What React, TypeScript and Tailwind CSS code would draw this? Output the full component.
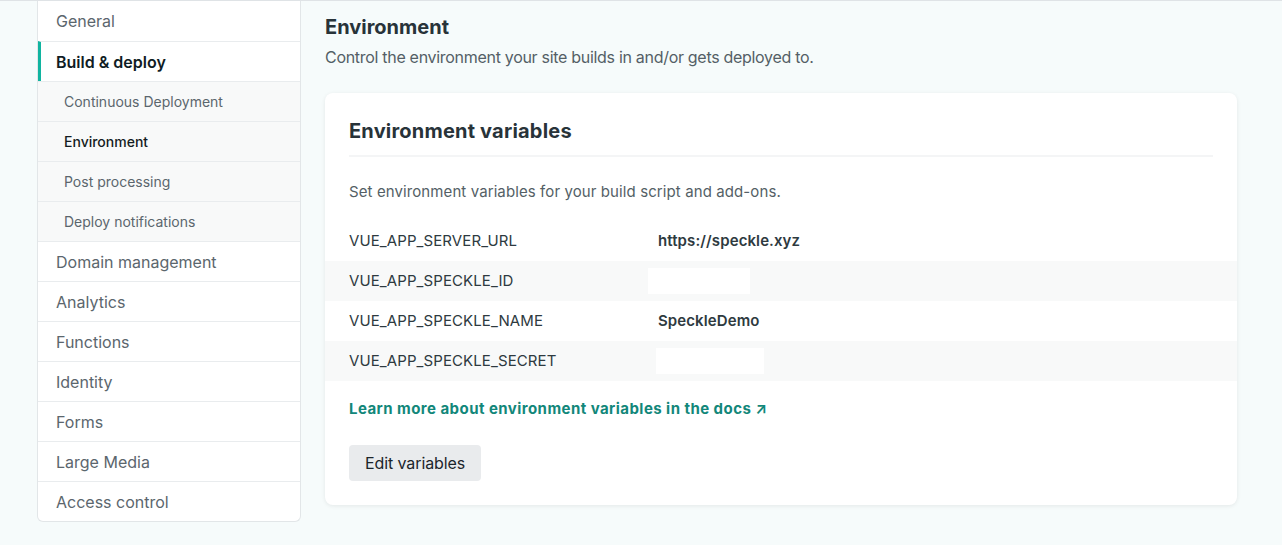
import React from "react";

const nav = [
  { label: "General" },
  { label: "Build & deploy", active: true },
  { label: "Continuous Deployment", sub: true },
  { label: "Environment", sub: true, current: true },
  { label: "Post processing", sub: true },
  { label: "Deploy notifications", sub: true },
  { label: "Domain management" },
  { label: "Analytics" },
  { label: "Functions" },
  { label: "Identity" },
  { label: "Forms" },
  { label: "Large Media" },
  { label: "Access control" },
];

const vars = [
  { key: "VUE_APP_SERVER_URL", value: "https://speckle.xyz" },
  { key: "VUE_APP_SPECKLE_ID", hidden: "ml-[-10px] w-[102px]" },
  { key: "VUE_APP_SPECKLE_NAME", value: "SpeckleDemo" },
  { key: "VUE_APP_SPECKLE_SECRET", hidden: "ml-[-2px] w-[108px]" },
];

export default function App() {
  return (
    <div className="min-h-[545px] bg-[#f6fbfb] border-t border-[#dfe3e6] font-['Inter',sans-serif] text-[#2e3a40]">
      <div className="flex items-start gap-6 pl-[37px] pr-[45px]">
        <nav className="w-[264px] shrink-0 bg-white border border-t-0 border-[#e2e6e8] rounded-b-md overflow-hidden">
          {nav.map((n, i) => (
            <div
              key={n.label}
              className={
                "h-10 flex items-center " +
                (i > 0 ? "border-t border-[#e9ecee] " : "") +
                (n.sub ? "bg-[#f8f9f9] pl-[26px] text-[14px] " : "pl-[18px] text-[16px] ") +
                (n.active ? "border-l-[3px] border-l-[#10b4a0] !pl-[15px] font-semibold text-[#0f1c24] " : "") +
                (n.current ? "text-[#141c22] font-medium " : "") +
                (!n.active && !n.current ? "text-[#5b666d]" : "")
              }
            >
              {n.label}
            </div>
          ))}
        </nav>
        <main className="flex-1 pt-[12px]">
          <h1 className="text-[20px] font-bold leading-7 text-[#283339]">Environment</h1>
          <p className="text-[16px] leading-6 mt-[4px] tracking-[-0.3px] text-[#545f66]">
            Control the environment your site builds in and/or gets deployed to.
          </p>
          <section className="mt-[24px] bg-white rounded-lg shadow-[0_1px_4px_rgba(0,0,0,0.08)] pb-6">
            <div className="px-6 pt-[24px]">
              <h2 className="text-[20px] font-bold leading-7 tracking-[0.2px] text-[#283339] pb-[10px] border-b-2 border-[#f4f5f6]">
                Environment variables
              </h2>
              <p className="text-[15px] leading-6 mt-[23px] tracking-[0.1px] text-[#545f66]">
                Set environment variables for your build script and add-ons.
              </p>
            </div>
            <div className="mt-[17px]">
              {vars.map((v, i) => (
                <div
                  key={v.key}
                  className={"h-10 flex items-center px-6 text-[15px] tracking-[0.1px] " + (i % 2 === 1 ? "bg-[#f8f9f9]" : "")}
                >
                  <div className="w-[309px] text-[#2e3a40]">{v.key}</div>
                  {v.value ? (
                    <div className="font-semibold text-[#2e3a40]">{v.value}</div>
                  ) : (
                    <div className={"h-[26px] bg-white " + v.hidden}></div>
                  )}
                </div>
              ))}
            </div>
            <div className="px-6">
              <a className="block mt-[16px] text-[15px] font-bold leading-6 tracking-[0.45px] text-[#12877a]">
                Learn more about environment variables in the docs ↗
              </a>
              <button className="mt-[24px] h-9 px-4 rounded bg-[#e9ebed] text-[16px] tracking-[-0.1px] text-[#1c252b]">
                Edit variables
              </button>
            </div>
          </section>
        </main>
      </div>
    </div>
  );
}
